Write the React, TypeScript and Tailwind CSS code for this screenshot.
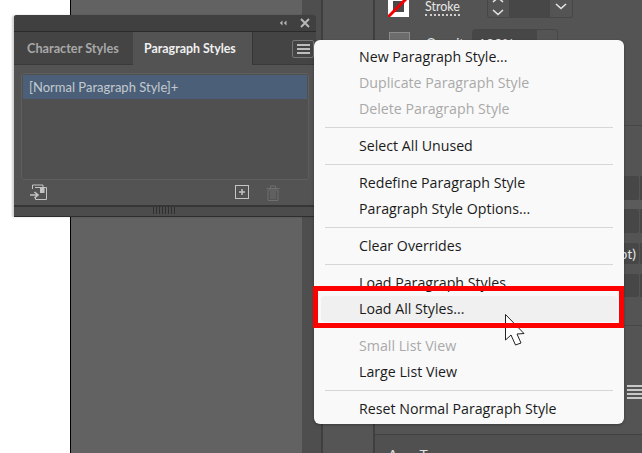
import * as React from "react"

function Row({ label, disabled, hover }: { label: string; disabled?: boolean; hover?: boolean }) {
  return (
    <div className={"mx-[7px] flex h-[26px] items-center rounded-[4px] pb-px pl-[38px] text-[14.2px] " + (disabled ? "text-[#a9a9a9] " : "text-[#1b1b1b] ") + (hover ? "bg-[#f0f0f0]" : "")}>
      {label}
    </div>
  )
}

function Sep() {
  return (
    <div className="mx-[11px] h-[11px] pt-[5px]">
      <div className="h-px bg-[#d6d6d6]" />
    </div>
  )
}

function Menu() {
  return (
    <div className="absolute left-[314px] top-[40px] w-[310px] h-[384px] rounded-[6px] bg-[#f9f9f9] pt-[4px] font-['Open_Sans',sans-serif] shadow-[0_1px_3px_rgba(0,0,0,0.3)]">
      <Row label="New Paragraph Style..." />
      <Row label="Duplicate Paragraph Style" disabled />
      <Row label="Delete Paragraph Style" disabled />
      <Sep />
      <Row label="Select All Unused" />
      <Sep />
      <Row label="Redefine Paragraph Style" />
      <Row label="Paragraph Style Options..." />
      <Sep />
      <Row label="Clear Overrides" />
      <Sep />
      <Row label="Load Paragraph Styles" />
      <Row label="Load All Styles..." hover />
      <Sep />
      <Row label="Small List View" disabled />
      <Row label="Large List View" />
      <Sep />
      <Row label="Reset Normal Paragraph Style" />
    </div>
  )
}

function StylesPanel() {
  return (
    <div className="absolute left-[14px] top-[15px] flex h-[202px] w-[302px] flex-col overflow-hidden rounded-t-[3px] border-b border-[#2e2e2e] bg-[#535353] font-['Lato',sans-serif] shadow-[-2px_0_2px_rgba(0,0,0,0.18)]">
      <div className="flex h-[17px] shrink-0 items-center justify-end gap-[13px] border-b border-[#2a2a2a] bg-[#404040] pr-[6px]">
        <svg width="8" height="6" viewBox="0 0 8 6" className="text-[#b5b5b5]">
          <path d="M3.5 0.5 L0.8 3 L3.5 5.5 Z M7.5 0.5 L4.8 3 L7.5 5.5 Z" fill="currentColor" />
        </svg>
        <svg width="10" height="10" viewBox="0 0 10 10" className="text-[#b8b8b8]">
          <path d="M1 1 L9 9 M9 1 L1 9" stroke="currentColor" strokeWidth="2" />
        </svg>
      </div>
      <div className="flex h-[33px] shrink-0 items-stretch bg-[#444444]">
        <div className="flex w-[119px] items-center border-b border-[#3a3a3a] pl-[13px] pt-px text-[12.7px] font-bold text-[#a8a8a8]">Character Styles</div>
        <div className="flex w-[120px] items-center border-r border-[#363636] bg-[#535353] pl-[11px] pt-px text-[12.4px] font-bold text-[#f0f0f0]">Paragraph Styles</div>
        <div className="flex flex-1 items-start justify-end border-b border-[#3a3a3a] pt-[8px] pr-[2px]">
          <div className="flex h-[18px] w-[22px] flex-col items-center justify-center gap-[2.5px] rounded-[2px] border border-[#777777]">
            <div className="h-[1.5px] w-[13px] bg-[#bdbdbd]" />
            <div className="h-[1.5px] w-[13px] bg-[#bdbdbd]" />
            <div className="h-[1.5px] w-[13px] bg-[#bdbdbd]" />
          </div>
        </div>
      </div>
      <div className="mx-[7px] mt-[8px] h-[107px] w-[288px] shrink-0 rounded-[3px] border border-[#5e5e5e] bg-[#505050] p-[1px]">
        <div className="flex h-[24px] items-center bg-[#4b6078] pl-[6px] pt-px text-[13px] text-[#c3c9d0]">[Normal Paragraph Style]+</div>
      </div>
      <div className="flex h-[25px] shrink-0 items-center pl-[16px]">
        <svg width="18" height="17" viewBox="0 0 18 17" fill="none" className="text-[#c4c4c4]">
          <path d="M2.5 5 V1 H13 V3" stroke="currentColor" />
          <path d="M5 3.5 H16.5 V15.5 H5.5 V13" stroke="currentColor" />
          <path d="M10 4 H14.5 V9 H10 Z" fill="currentColor" />
          <path d="M0 11 H7 M4.5 8 L8 11 L4.5 14" stroke="currentColor" strokeWidth="1.6" />
        </svg>
        <svg width="15" height="15" viewBox="0 0 15 15" fill="none" className="ml-[187px] text-[#c4c4c4]">
          <rect x="0.5" y="0.5" width="13" height="13" stroke="currentColor" />
          <path d="M4 7 H10 M7 4 V10" stroke="currentColor" strokeWidth="1.5" />
        </svg>
        <svg width="14" height="16" viewBox="0 0 14 16" fill="none" className="ml-[16px] text-[#6e6e6e]">
          <path d="M0.5 3.5 H13.5 M4.5 3 V1 H9.5 V3" stroke="currentColor" />
          <path d="M2 5 H12 V15.5 H2 Z M5 6 V14 M7 6 V14 M9 6 V14" stroke="currentColor" />
        </svg>
      </div>
      <div className="flex flex-1 justify-center border-t-2 border-[#363636] bg-[#4c4c4c] pr-[2px]">
        <div className="flex h-[7px] gap-[2px]">
          {[0, 1, 2, 3, 4, 5, 6, 7].map((i) => (
            <div key={i} className="h-full w-px bg-[#2f2f2f]" />
          ))}
        </div>
      </div>
    </div>
  )
}

function Chevron({ up }: { up?: boolean }) {
  return (
    <svg width="12" height="7" viewBox="0 0 12 7" fill="none" className="shrink-0 text-[#e4e4e4]">
      <path d={up ? "M1 6 L6 1.5 L11 6" : "M1 1 L6 5.5 L11 1"} stroke="currentColor" strokeWidth="1.6" />
    </svg>
  )
}

function BoxRow({ children, h }: { children?: React.ReactNode; h: string }) {
  return (
    <div className={"flex shrink-0 justify-end gap-px " + h}>
      <div className="flex w-[200px] items-center justify-end rounded-[2px] bg-[#474747] pr-[3px] text-[14px] text-[#e6e6e6]">{children}</div>
      <div className="w-[2px] bg-[#474747]" />
    </div>
  )
}

function PropsPanel() {
  return (
    <div className="flex min-w-0 flex-1 flex-col bg-[#545454] font-['Lato',sans-serif]">
      <div className="flex h-[18px] shrink-0 items-end">
        <div className="relative ml-[13px] mb-[1px] h-[21px] w-[21px] shrink-0 overflow-hidden bg-white">
          <div className="m-[5px] h-[11px] w-[11px] bg-[#4a4a4a]" />
          <svg width="21" height="21" viewBox="0 0 21 21" className="absolute left-0 top-0">
            <path d="M0 21 L21 0" stroke="#f00000" strokeWidth="3" />
          </svg>
        </div>
        <div className="ml-[16px] mb-[2px] border-b-2 border-dotted border-[#cfcfcf] text-[12.5px] leading-[14px] text-[#e8e8e8]">Stroke</div>
        <div className="ml-[27px] flex h-[18px] w-[86px] rounded-b-[3px] border border-t-0 border-[#474747]">
          <div className="flex w-[22px] flex-col items-center gap-[6px] overflow-hidden border-r border-[#474747]">
            <div className="-mt-[4px]"><Chevron up /></div>
            <Chevron />
          </div>
          <div className="w-[40px] bg-[#474747]" />
          <div className="flex flex-1 items-center justify-center pb-[4px]"><Chevron /></div>
        </div>
      </div>
      <div className="mt-[11px] flex h-[22px] shrink-0">
        <div className="ml-[14px] mt-[3px] h-[19px] w-[21px] border border-[#8a8a8a] bg-[#6c6c6c]" />
        <div className="ml-[16px] mt-[5px] w-[46px] overflow-hidden text-[13px] text-[#e8e8e8]">Opacity</div>
        <div className="flex h-[22px] w-[86px] rounded-t-[3px] border border-[#474747]">
          <div className="w-[64px] bg-[#474747] pl-[5px] pt-[3px] text-[14px] text-[#e8e8e8]">100%</div>
          <div className="flex-1" />
        </div>
      </div>
      <div className="mt-[74px] h-px shrink-0 bg-[#474747]" />
      <div className="h-[50px] shrink-0" />
      <BoxRow h="h-[24px]" />
      <div className="h-[9px] shrink-0 bg-[#5b5b5b]" />
      <BoxRow h="h-[24px]" />
      <div className="h-[10px] shrink-0" />
      <BoxRow h="h-[21px]">pt)</BoxRow>
      <div className="h-[10px] shrink-0" />
      <BoxRow h="h-[23px]" />
      <div className="h-[28px] shrink-0" />
      <div className="h-px shrink-0 bg-[#474747]" />
      <div className="flex h-[73px] shrink-0 flex-col items-end justify-end gap-[2px]">
        {[0, 1, 2, 3].map((i) => (
          <div key={i} className="h-[2px] w-[15px] bg-[#c8c8c8]" />
        ))}
      </div>
      <div className="h-[35px] shrink-0" />
      <div className="h-px shrink-0 bg-[#404040]" />
      <div className="flex flex-1 gap-[22px] overflow-hidden bg-[#505050] pl-[13px] pt-[10px] text-[14px] leading-[20px] text-[#e0e0e0]">
        <span>A</span>
        <span>T</span>
      </div>
    </div>
  )
}

export default function App() {
  return (
    <div className="relative flex h-[453px] w-[642px] overflow-hidden bg-white">
      <div className="w-[70px] shrink-0 bg-white" />
      <div className="w-px shrink-0 bg-black" />
      <div className="w-[231px] shrink-0 bg-[#626262]" />
      <div className="w-[21px] shrink-0 border-r-2 border-[#3f3f3f] bg-[#4e4e4e]" />
      <div className="w-[52px] shrink-0 border-r-2 border-[#3f3f3f] bg-[#555555]" />
      <PropsPanel />
      <StylesPanel />
      <Menu />
      <svg width="22" height="34" viewBox="0 0 22 34" className="absolute left-[504px] top-[313px]">
        <path d="M1.5 1.5 V27 L7 22 L11.5 32 L17 30 L13 21 L20 20.5 Z" fill="white" stroke="#222222" />
      </svg>
      <div className="absolute left-[313px] top-[286px] h-[42px] w-[311px] border-[5px] border-[#ff0000]" />
    </div>
  )
}
